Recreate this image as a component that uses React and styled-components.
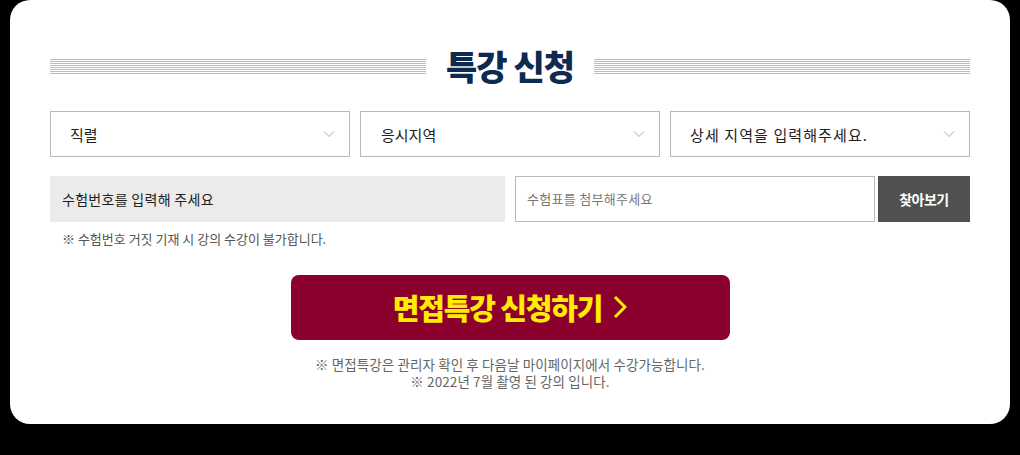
import React from "react";
import styled, { createGlobalStyle } from "styled-components";

const Global = createGlobalStyle`
  html, body { margin: 0; padding: 0; background: #000; }
  body { font-family: "Noto Sans CJK KR", "Noto Sans", sans-serif; }
  * { box-sizing: border-box; }
`;

const Card = styled.div`
  width: 1000px;
  height: 424px;
  margin-left: 10px;
  background: #fff;
  border-radius: 20px;
  padding: 44px 40px 0;
`;

const TitleRow = styled.div`
  display: flex;
  align-items: center;
  gap: 20px;
  height: 44px;
`;

const Lines = styled.div`
  flex: 1;
  height: 15px;
  background: repeating-linear-gradient(
    to bottom,
    #b9bccc 0px,
    #b9bccc 1px,
    #fff 1px,
    #fff 2px
  );
`;

const Title = styled.h2`
  margin: 0;
  font-size: 34px;
  font-weight: 900;
  color: #0d2a50;
  letter-spacing: -1px;
  line-height: 44px;
`;

const SelectRow = styled.div`
  display: grid;
  grid-template-columns: repeat(3, 1fr);
  gap: 10px;
  margin-top: 23px;
`;

const SelectBox = styled.div`
  height: 46px;
  border: 1px solid #b8b8b8;
  display: flex;
  align-items: center;
  justify-content: space-between;
  padding: 0 14px 0 ${(p) => p.$pl || 19}px;
  font-size: 15px;
  color: #222;
  letter-spacing: ${(p) => p.$ls || 0}px;
`;

const InputRow = styled.div`
  display: flex;
  margin-top: 19px;
  height: 46px;
`;

const GreyInput = styled.div`
  width: 455px;
  background: #ebebeb;
  display: flex;
  align-items: center;
  padding-left: 12px;
  font-size: 14px;
  letter-spacing: 0.3px;
  color: #222;
`;

const FileBox = styled.div`
  width: 360px;
  margin-left: 10px;
  border: 1px solid #bbb;
  display: flex;
  align-items: center;
  padding-left: 11px;
  font-size: 13px;
  letter-spacing: 0.3px;
  color: #777;
  padding-bottom: 2px;
`;

const FindButton = styled.button`
  width: 92px;
  margin-left: 3px;
  border: 0;
  background: #505050;
  color: #fff;
  font-family: inherit;
  font-size: 14px;
  font-weight: 700;
  letter-spacing: -0.5px;
  padding: 0;
`;

const Warning = styled.p`
  margin: 7px 0 0 12px;
  font-size: 13px;
  color: #555;
  letter-spacing: 0;
  line-height: 20px;
`;

const ApplyWrap = styled.div`
  display: flex;
  justify-content: center;
  margin-top: 26px;
`;

const ApplyButton = styled.button`
  width: 439px;
  height: 65px;
  border: 0;
  border-radius: 8px;
  background: #8c002e;
  color: #ffec00;
  font-family: inherit;
  font-size: 29px;
  font-weight: 900;
  letter-spacing: -1.2px;
  display: flex;
  align-items: center;
  justify-content: center;
  gap: 11px;
  padding: 0 0 2px 0;
`;

const Notes = styled.div`
  margin-top: 16px;
  display: flex;
  flex-direction: column;
  align-items: center;
  font-size: 13.5px;
  color: #666;
  letter-spacing: 0.1px;
`;

const NoteLine = styled.p`
  margin: 0;
  line-height: 17px;
  height: 17px;
`;

const Chevron = () => (
  <svg width="12" height="8" viewBox="0 0 12 8" fill="none">
    <path d="M1 1.5l5 5 5-5" stroke="#aaa" strokeWidth="1" />
  </svg>
);

const Arrow = () => (
  <svg width="14" height="24" viewBox="0 0 14 24" fill="none">
    <path d="M2 2l10 10-10 10" stroke="#ffec00" strokeWidth="3" />
  </svg>
);

export default function App() {
  return (
    <>
      <Global />
      <Card>
        <TitleRow>
          <Lines />
          <Title>특강 신청</Title>
          <Lines />
        </TitleRow>
        <SelectRow>
          <SelectBox $pl={19}>
            <span>직렬</span>
            <Chevron />
          </SelectBox>
          <SelectBox $pl={20}>
            <span>응시지역</span>
            <Chevron />
          </SelectBox>
          <SelectBox $pl={19} $ls={1.1}>
            <span>상세 지역을 입력해주세요.</span>
            <Chevron />
          </SelectBox>
        </SelectRow>
        <InputRow>
          <GreyInput>수험번호를 입력해 주세요</GreyInput>
          <FileBox>수험표를 첨부해주세요</FileBox>
          <FindButton>찾아보기</FindButton>
        </InputRow>
        <Warning>※ 수험번호 거짓 기재 시 강의 수강이 불가합니다.</Warning>
        <ApplyWrap>
          <ApplyButton>
            <span>면접특강 신청하기</span>
            <Arrow />
          </ApplyButton>
        </ApplyWrap>
        <Notes>
          <NoteLine>※ 면접특강은 관리자 확인 후 다음날 마이페이지에서 수강가능합니다.</NoteLine>
          <NoteLine>※ 2022년 7월 촬영 된 강의 입니다.</NoteLine>
        </Notes>
      </Card>
    </>
  );
}
